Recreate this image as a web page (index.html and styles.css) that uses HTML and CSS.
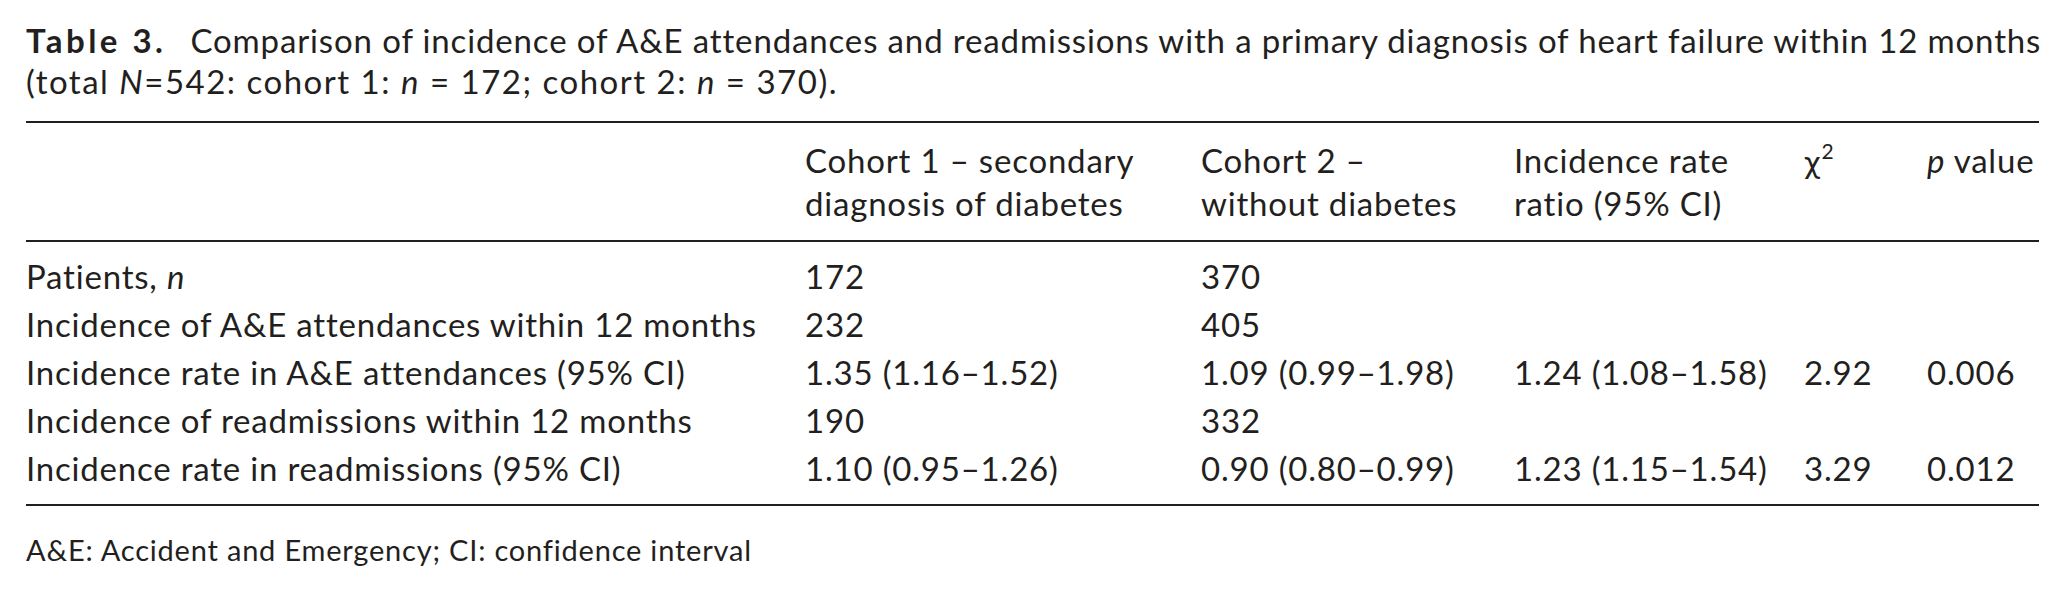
FILE: index.html
```html
<!DOCTYPE html>
<html lang="en">
<head>
<meta charset="utf-8">
<title>Table 3</title>
<link rel="stylesheet" href="styles.css">
</head>
<body>
<div class="table-fig">
  <p class="caption"><b class="label">Table 3.</b>Comparison of incidence of A&amp;E attendances and readmissions with a primary diagnosis of heart failure within 12 months<br><span class="cap-2">(total <i>N</i>=542: cohort 1: <i>n</i> = 172; cohort 2: <i>n</i> = 370).</span></p>
  <table class="data">
    <colgroup>
      <col class="c-label">
      <col class="c-co1">
      <col class="c-co2">
      <col class="c-irr">
      <col class="c-chi">
      <col class="c-p">
    </colgroup>
    <thead>
      <tr>
        <th></th>
        <th>Cohort 1 – secondary<br>diagnosis of diabetes</th>
        <th>Cohort 2 –<br>without diabetes</th>
        <th>Incidence rate<br>ratio (95% CI)</th>
        <th><span class="chi">χ</span><sup>2</sup></th>
        <th><i>p</i> value</th>
      </tr>
    </thead>
    <tbody>
      <tr><td>Patients, <i>n</i></td><td>172</td><td>370</td><td></td><td></td><td></td></tr>
      <tr><td>Incidence of A&amp;E attendances within 12 months</td><td>232</td><td>405</td><td></td><td></td><td></td></tr>
      <tr><td>Incidence rate in A&amp;E attendances (95% CI)</td><td>1.35 (1.16–1.52)</td><td>1.09 (0.99–1.98)</td><td>1.24 (1.08–1.58)</td><td>2.92</td><td>0.006</td></tr>
      <tr><td>Incidence of readmissions within 12 months</td><td>190</td><td>332</td><td></td><td></td><td></td></tr>
      <tr><td>Incidence rate in readmissions (95% CI)</td><td>1.10 (0.95–1.26)</td><td>0.90 (0.80–0.99)</td><td>1.23 (1.15–1.54)</td><td>3.29</td><td>0.012</td></tr>
    </tbody>
  </table>
  <p class="foot">A&amp;E: Accident and Emergency; CI: confidence interval</p>
</div>
</body>
</html>
```
FILE: styles.css
```css
html, body {
  margin: 0;
  padding: 0;
  background: #ffffff;
}

body {
  color: #231f20;
  font-family: "Lato", "Open Sans", sans-serif;
}

.table-fig {
  padding: 20px 26px 0 26px;
}

.caption {
  margin: 0 0 19px 0;
  font-size: 33px;
  line-height: 41px;
  letter-spacing: 0.86px;
  white-space: nowrap;
}

.caption .label {
  font-weight: 700;
  letter-spacing: 3.5px;
  margin-right: 24px;
}

.caption .cap-2 {
  letter-spacing: 1.5px;
}

.caption i,
.data i {
  font-style: italic;
}

.data {
  width: 2013px;
  table-layout: fixed;
  border-collapse: collapse;
  border-top: 2px solid #231f20;
  border-bottom: 2px solid #231f20;
  font-size: 33px;
  letter-spacing: 0.8px;
}

.c-label { width: 779px; }
.c-co1 { width: 396px; }
.c-co2 { width: 313px; }
.c-irr { width: 290px; }
.c-chi { width: 123px; }
.c-p { width: 112px; }

.data thead tr {
  border-bottom: 2px solid #231f20;
}

.data th {
  font-weight: 400;
  text-align: left;
  vertical-align: top;
  padding: 16px 0 15px 0;
  line-height: 43px;
  white-space: nowrap;
}

.data th sup {
  font-size: 21px;
  line-height: 0;
  position: relative;
  top: -2px;
  vertical-align: super;
}

.data .chi {
  font-family: "DejaVu Sans", "Lato", sans-serif;
  font-size: 29px;
}

.data td {
  padding: 0;
  line-height: 48px;
  text-align: left;
  white-space: nowrap;
}

.data tbody tr:first-child td {
  padding-top: 10px;
}

.data tbody tr:last-child td {
  padding-bottom: 12px;
}

.foot {
  margin: 24px 0 0 0;
  font-size: 29px;
  line-height: 40px;
  letter-spacing: 0.8px;
}
```
